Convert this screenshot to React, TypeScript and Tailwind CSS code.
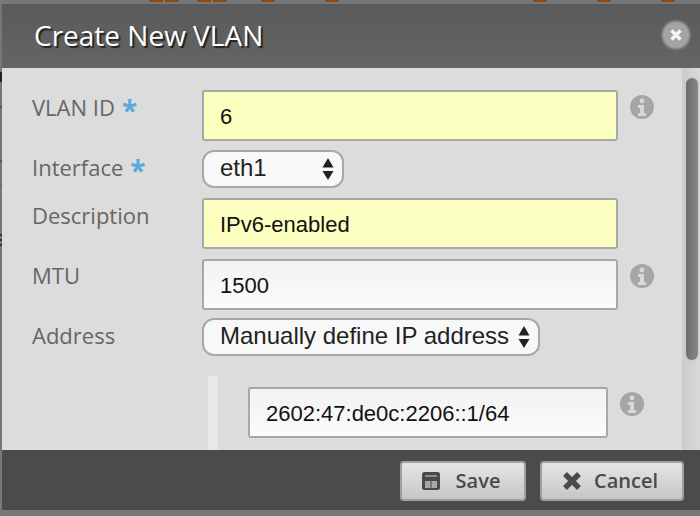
import React from 'react'

const sans = "font-['Open_Sans','Noto_Sans',sans-serif]"
const arial = "font-['Liberation_Sans',Arial,sans-serif]"

// bits of the page behind the dialog that stick out at the edges
const topMarks = [149, 165, 197, 213, 261, 325, 533, 597, 661]
const edgeMarks = [
  { top: 72, height: 10, color: '#222' },
  { top: 106, height: 2, color: '#555' },
  { top: 160, height: 2, color: '#555' },
  { top: 185, height: 2, color: '#666' },
  { top: 234, height: 2, color: '#333' },
  { top: 239, height: 2, color: '#333' },
  { top: 244, height: 2, color: '#333' },
]

function InfoDot() {
  return (
    <svg width="24" height="24" viewBox="0 0 24 24" className="shrink-0 blur-[0.4px]">
      <circle cx="12" cy="12" r="12" fill="#a6a6a6" />
      <circle cx="12" cy="6" r="2.400" fill="#d8d8d8" />
      <path d="M8 10h6v8h2v3H8v-3h2v-5H8z" fill="#d8d8d8" />
    </svg>
  )
}

function Arrows() {
  return (
    <svg width="12" height="24" viewBox="0 0 12 24" className="shrink-0">
      <path d="M6 1l5.500 9.500h-11z" fill="#222" />
      <path d="M6 23l-5.500-9h11z" fill="#222" />
    </svg>
  )
}

function Label({ text, required }: { text: string; required?: boolean }) {
  return (
    <div className={`${sans} flex w-[170px] shrink-0 text-[22px] leading-[28px] text-[#666]`}>
      {text}
      {required && <span className="ml-[7px] translate-y-[3px] text-[28px] font-bold leading-[28px] text-[#5aa9dc]">*</span>}
    </div>
  )
}

function Field({ value, yellow, width }: { value: string; yellow?: boolean; width: string }) {
  return (
    <div
      className={`${arial} ${width} flex h-[51px] items-center rounded-[3px] border-2 border-[#a8a8a8] pl-[16px] pt-[2px] text-[22px] text-[#111] ${
        yellow ? 'bg-[#fbffc0]' : 'bg-gradient-to-b from-[#f2f2f2] to-[#fbfbfb]'
      }`}
    >
      {value}
    </div>
  )
}

function Select({ value, width }: { value: string; width: string }) {
  return (
    <div
      className={`${arial} ${width} flex h-[38px] items-center justify-between rounded-[12px] border-2 border-[#a8a8a8] bg-[#f8f8f8] pl-[16px] pr-[8px] text-[24px] text-[#222]`}
    >
      <span className="-translate-y-[1px]">{value}</span>
      <Arrows />
    </div>
  )
}

function FooterButton({ label, icon, className }: { label: string; icon: React.ReactNode; className: string }) {
  return (
    <div
      className={`${sans} ${className} flex h-[40px] items-center justify-center rounded-[4px] border-2 border-[#a0a0a0] bg-gradient-to-b from-[#e6e6e6] to-[#c6c6c6] pr-[4px] text-[20px] font-semibold text-[#4a4a4a]`}
    >
      {icon}
      {label}
    </div>
  )
}

export default function App() {
  return (
    <div className="relative h-[516px] w-[700px] overflow-hidden bg-[#777]">
      {topMarks.map((left) => (
        <div key={left} className="absolute top-0 h-[2px] w-[14px] bg-[#8a4a10]" style={{ left }} />
      ))}
      {edgeMarks.map((m) => (
        <div key={m.top} className="absolute left-0 w-[2px]" style={{ top: m.top, height: m.height, backgroundColor: m.color }} />
      ))}
      <div className="ml-[2px] mt-[4px] flex h-[512px] flex-col overflow-hidden">
        <div className="flex h-[64px] shrink-0 items-center justify-between bg-gradient-to-b from-[#5a5a5a] to-[#656565] pb-[2px] pl-[32px] pr-[10px]">
          <h1 className={`${sans} text-[28px] leading-none text-white [text-shadow:2px_2px_1px_#222]`}>Create New VLAN</h1>
          <div className="relative flex h-[28px] w-[28px] items-center justify-center">
            <div className="absolute inset-0 rounded-full bg-[#a4a4a4] blur-[1px]" />
            <svg width="12" height="12" viewBox="0 0 12 12" className="relative">
              <path d="M1.500 1.500l9 9M10.500 1.500l-9 9" stroke="#f4f4f4" strokeWidth="3.500" />
            </svg>
          </div>
        </div>

        <div className="flex h-[382px] shrink-0 bg-[#dcdcdc]">
          <div className="flex-1 overflow-hidden pl-[30px] pt-[22px]">
            <div className="flex items-start">
              <div className="pt-[3px]"><Label text="VLAN ID" required /></div>
              <Field value="6" yellow width="w-[416px]" />
              <div className="ml-[12px] mt-[5px]"><InfoDot /></div>
            </div>
            <div className="mt-[9px] flex items-center">
              <div className="pb-[5px]"><Label text="Interface" required /></div>
              <Select value="eth1" width="w-[142px]" />
            </div>
            <div className="mt-[10px] flex items-start">
              <div className="pt-[3px]"><Label text="Description" /></div>
              <Field value="IPv6-enabled" yellow width="w-[416px]" />
            </div>
            <div className="mt-[10px] flex items-start">
              <div className="pt-[2px]"><Label text="MTU" /></div>
              <Field value="1500" width="w-[416px]" />
              <div className="ml-[12px] mt-[5px]"><InfoDot /></div>
            </div>
            <div className="mt-[8px] flex items-center">
              <div className="pb-[5px]"><Label text="Address" /></div>
              <Select value="Manually define IP address" width="w-[338px]" />
            </div>
            <div className="ml-[176px] mt-[20px] flex h-[80px] items-start border-l-[10px] border-[#e8e8e8] pl-[30px] pt-[11px]">
              <Field value="2602:47:de0c:2206::1/64" width="w-[360px]" />
              <div className="ml-[12px] mt-[5px]"><InfoDot /></div>
            </div>
          </div>
          <div className="w-[18px] shrink-0 bg-gradient-to-r from-[#cccccc] to-[#d8d8d8] pl-[4px] pt-[10px]">
            <div className="h-[282px] w-[12px] rounded-full bg-gradient-to-r from-[#6c6c6c] to-[#888] shadow-[0_0_3px_#bbb]" />
          </div>
        </div>

        <div className="flex h-[60px] shrink-0 justify-end gap-[14px] bg-[#4b4b4b] pr-[16px] pt-[11px]">
          <FooterButton
            label="Save"
            className="w-[126px] gap-[16px]"
            icon={
              <svg width="18" height="18" viewBox="0 0 18 18" className="blur-[0.3px]">
                <rect width="18" height="18" rx="2.500" fill="#4a4a4a" />
                <rect x="3" y="3" width="12" height="2" fill="#8c8c8c" />
                <path d="M3 9h5.500v7H3zM9.500 9H15v7H9.500z" fill="#a8a8a8" />
              </svg>
            }
          />
          <FooterButton
            label="Cancel"
            className="w-[144px] gap-[12px]"
            icon={
              <svg width="20" height="18" viewBox="0 0 20 18" className="blur-[0.3px]">
                <path d="M3 2l14 14M17 2L3 16" stroke="#4a4a4a" strokeWidth="5.500" />
              </svg>
            }
          />
        </div>
        <div className="flex-1 bg-[#777]" />
      </div>
    </div>
  )
}
